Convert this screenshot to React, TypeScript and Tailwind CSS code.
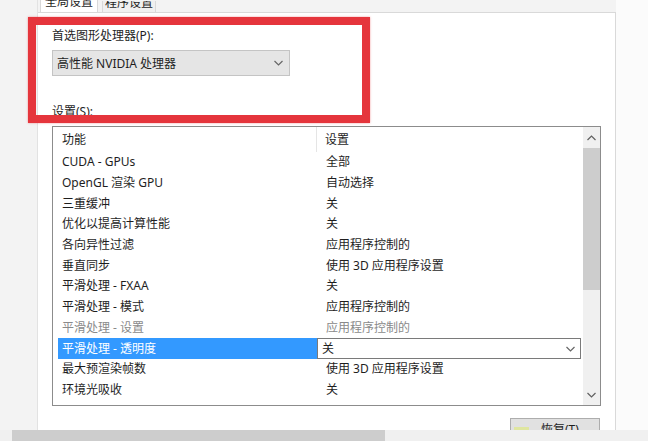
import React from "react";

const Chevron = ({ up = false, color = "#555" }: { up?: boolean; color?: string }) => (
  <svg width="9" height="6" viewBox="0 0 9 6" className="shrink-0">
    <polyline
      points={up ? "0.5,5 4.5,1 8.5,5" : "0.5,1 4.5,5 8.5,1"}
      fill="none"
      stroke={color}
      strokeWidth="1.2"
    />
  </svg>
);

const rows: { k: string; v: string; dim?: boolean; sel?: boolean }[] = [
  { k: "CUDA - GPUs", v: "全部" },
  { k: "OpenGL 渲染 GPU", v: "自动选择" },
  { k: "三重缓冲", v: "关" },
  { k: "优化以提高计算性能", v: "关" },
  { k: "各向异性过滤", v: "应用程序控制的" },
  { k: "垂直同步", v: "使用 3D 应用程序设置" },
  { k: "平滑处理 - FXAA", v: "关" },
  { k: "平滑处理 - 模式", v: "应用程序控制的" },
  { k: "平滑处理 - 设置", v: "应用程序控制的", dim: true },
  { k: "平滑处理 - 透明度", v: "关", sel: true },
  { k: "最大预渲染帧数", v: "使用 3D 应用程序设置" },
  { k: "环境光吸收", v: "关" },
];

export default function App() {
  return (
    <div className="relative w-[648px] h-[444px] overflow-hidden bg-white flex flex-col text-[12px] text-[#1e1e1e] [font-family:'Noto_Sans','Noto_Sans_CJK_SC',sans-serif]">
      <div className="flex h-[430px] shrink-0">
        <div className="w-[38px] shrink-0 bg-[#f3f3f3] border-r border-[#e2e2e2]" />
        <div className="w-[578px] shrink-0 flex flex-col">
          <div className="h-[12px] shrink-0 flex items-end bg-[#f3f3f3] pl-[2px] gap-[4px]">
            <div className="w-[58px] h-[12px] overflow-hidden bg-white border-x border-[#d9d9d9] flex items-end justify-center">
              <span className="leading-[20px] whitespace-nowrap">全局设置</span>
            </div>
            <div className="w-[54px] h-[11px] overflow-hidden bg-[#f0f0f0] border-x border-[#d9d9d9] flex items-end justify-center">
              <span className="leading-[19px] whitespace-nowrap">程序设置</span>
            </div>
          </div>
          <div className="flex-1 bg-white border-t border-r border-[#d9d9d9] pl-[14px] pt-[15px] flex flex-col overflow-hidden">
            <div className="h-[16px] leading-[16px] whitespace-nowrap">首选图形处理器(P):</div>
            <div className="mt-[6px] w-[238px] h-[26px] shrink-0 bg-[#e5e5e5] border border-[#c4c4c4] flex items-center pl-[4px] pr-[6px] justify-between">
              <span className="whitespace-nowrap mt-[1px]">高性能 NVIDIA 处理器</span>
              <Chevron color="#666" />
            </div>
            <div className="mt-[28px] h-[16px] leading-[16px] whitespace-nowrap">设置(S):</div>
            <div className="mt-[6px] w-[549px] h-[280px] shrink-0 border border-[#8c8c8c] flex overflow-hidden">
              <div className="w-[530px] flex flex-col">
                <div className="h-[25px] shrink-0 flex items-center">
                  <div className="w-[264px] h-full pl-[9px] flex items-center border-r border-[#e5e5e5]">功能</div>
                  <div className="pl-[8px]">设置</div>
                </div>
                {rows.map((r) => (
                  <div key={r.k} className={`h-[20.7px] shrink-0 flex ${r.dim ? "text-[#8a8a8a]" : ""}`}>
                    <div className="w-[264px] pl-[5px] flex">
                      <div className={`flex-1 pl-[4px] flex items-center whitespace-nowrap ${r.sel ? "bg-[#3399ff] text-white" : ""}`}>
                        {r.k}
                      </div>
                    </div>
                    {r.sel ? (
                      <div className="w-[264px] h-full border border-[#7a7a7a] bg-white flex items-center justify-between pl-[4px] pr-[5px]">
                        <span>{r.v}</span>
                        <Chevron color="#666" />
                      </div>
                    ) : (
                      <div className="pl-[9px] flex items-center whitespace-nowrap">{r.v}</div>
                    )}
                  </div>
                ))}
              </div>
              <div className="w-[17px] flex flex-col bg-[#f0f0f0]">
                <div className="h-[21px] shrink-0 flex items-center justify-center">
                  <Chevron up color="#606060" />
                </div>
                <div className="h-[142px] shrink-0 bg-[#cdcdcd]" />
                <div className="flex-1" />
                <div className="h-[20px] shrink-0 flex items-center justify-center">
                  <Chevron color="#606060" />
                </div>
              </div>
            </div>
            <div className="mt-[12px] ml-[458px] w-[90px] h-[22px] shrink-0 bg-[#e1e1e1] border border-[#adadad] flex items-center pl-[3px]">
              <div className="w-[15px] h-[12px] bg-[#dfe6a0] mt-[8px]" />
              <span className="ml-[12px] mt-[2px] whitespace-nowrap">恢复(T)</span>
            </div>
          </div>
        </div>
        <div className="flex-1 bg-[#fbfbfb]" />
      </div>
      <div className="h-[11px] shrink-0 flex bg-[#f0f0f0]">
        <div className="w-[12px]" />
        <div className="w-[373px] bg-[#cdcdcd]" />
      </div>
      <div className="flex-1 bg-white" />
      <div className="absolute left-[28px] top-[17px] w-[342px] h-[106px] border-[8px] border-[#e5353c] shadow-[0_0_2px_rgba(229,53,60,0.5)]" />
    </div>
  );
}
